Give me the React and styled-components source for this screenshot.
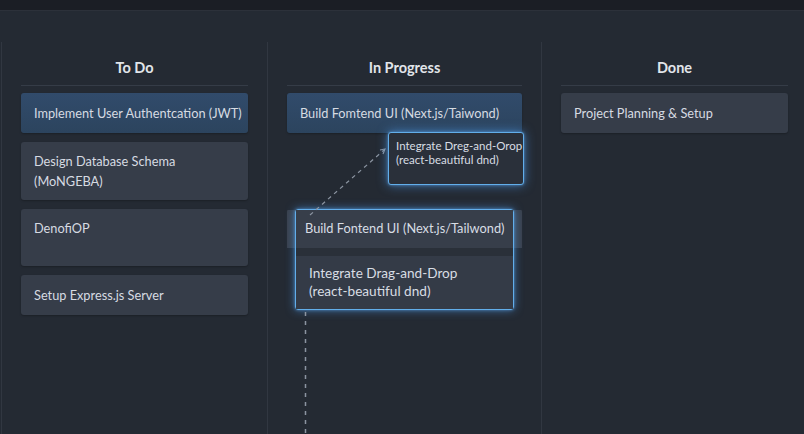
import styled, { createGlobalStyle, css } from 'styled-components';

const GlobalStyle = createGlobalStyle`
  html, body {
    margin: 0;
    padding: 0;
    background: #242a33;
    font-family: Lato, "Liberation Sans", sans-serif;
    color: #d9dee5;
  }
`;

const Page = styled.div`
  height: 434px;
  overflow: hidden;
  display: flex;
  flex-direction: column;
`;

const TopBar = styled.div`
  height: 10px;
  flex-shrink: 0;
  background: #1b1e25;
  border-bottom: 1px solid #2c313a;
`;

const Board = styled.div`
  flex: 1;
  display: grid;
  grid-template-columns: 266px 274px 1fr;
  padding-top: 31px;
  margin-left: 1px;
`;

const Column = styled.section`
  position: relative;
  border-left: 1px solid #313741;
  padding: 16px ${(p) => p.$right || 19}px 0 19px;
  display: flex;
  flex-direction: column;
`;

const ColumnTitle = styled.h2`
  margin: 0;
  font-size: 14.5px;
  font-weight: 700;
  line-height: 20px;
  text-align: center;
  color: #e1e5ea;
  padding-bottom: 7px;
  border-bottom: 1px solid #353c47;
  margin-bottom: 7px;
`;

const CardList = styled.div`
  display: flex;
  flex-direction: column;
  gap: 9px;
`;

const Card = styled.div`
  box-sizing: border-box;
  min-height: ${(p) => (p.$tall ? 57 : 39)}px;
  padding: ${(p) => (p.$tall ? '9px' : '10px')} 13px;
  border-radius: 3px;
  font-size: 12.75px;
  line-height: 20px;
  white-space: nowrap;
  color: #d6dbe2;
  background: #363d49;
  box-shadow: 0 1px 2px rgba(0, 0, 0, 0.25);
  ${(p) =>
    p.$active &&
    css`
      background: linear-gradient(180deg, #314b6b, #2c445e);
    `}
`;

const Slot = styled.div`
  height: 58px;
`;

/* placeholder row peeking out behind the highlighted drop target */
const DropArea = styled.div`
  position: relative;
  background: linear-gradient(#3a414d, #3a414d) no-repeat;
  background-size: 100% 38px;
  background-position: 0 1px;
  border-radius: 3px;
`;

const DropZone = styled.div`
  position: relative;
  margin: 0 8px;
  border: 1.5px solid #62aeea;
  border-radius: 3px;
  box-shadow: 0 0 10px rgba(74, 150, 230, 0.65), 0 0 3px rgba(110, 180, 245, 0.6),
    inset 0 0 6px rgba(74, 150, 230, 0.25);
`;

const ZoneCard = styled.div`
  box-sizing: border-box;
  height: ${(p) => p.$h}px;
  padding: ${(p) => p.$pad};
  font-size: ${(p) => p.$size}px;
  line-height: 18px;
  white-space: nowrap;
  color: #d8dde4;
  background: ${(p) => p.$bg};
`;

const ZoneGap = styled.div`
  height: 8px;
  background: #2a3039;
`;

const Ghost = styled.div`
  position: absolute;
  left: 120px;
  top: 90px;
  width: 136px;
  height: 53px;
  box-sizing: border-box;
  padding: 6px 0 0 7px;
  border: 1.5px solid #62aeea;
  border-radius: 3px;
  background: #2a303a;
  box-shadow: 0 0 11px rgba(74, 150, 230, 0.7), 0 0 3px rgba(110, 180, 245, 0.6);
  font-size: 11.5px;
  line-height: 14px;
  color: #d8dde4;
  white-space: nowrap;
`;

const Trail = styled.svg`
  position: absolute;
  left: 0;
  top: 0;
  pointer-events: none;
`;

const todo = [
  { lines: ['Implement User Authentcation (JWT)'], active: true },
  { lines: ['Design Database Schema', '(MoNGEBA)'], tall: true },
  { lines: ['DenofiOP'], tall: true },
  { lines: ['Setup Express.js Server'] },
];

export default function App() {
  return (
    <>
      <GlobalStyle />
      <Page>
        <TopBar />
        <Board>
          <Column>
            <ColumnTitle>To Do</ColumnTitle>
            <CardList>
              {todo.map((c) => (
                <Card key={c.lines[0]} $active={c.active} $tall={c.tall}>
                  {c.lines.map((l) => (
                    <div key={l}>{l}</div>
                  ))}
                </Card>
              ))}
            </CardList>
          </Column>

          <Column>
            <ColumnTitle>In Progress</ColumnTitle>
            <CardList>
              <Card $active>Build Fomtend UI (Next.js/Taiwond)</Card>
              <Slot />
              <DropArea>
                <DropZone>
                  <ZoneCard $h={38} $pad="9px 9px" $size={12.8} $bg="#373e4a">
                    Build Fontend UI (Next.js/Tailwond)
                  </ZoneCard>
                  <ZoneGap />
                  <ZoneCard $h={53} $pad="8px 13px" $size={13.6} $bg="#343b47">
                    Integrate Drag-and-Drop
                    <br />
                    (react-beautiful dnd)
                  </ZoneCard>
                </DropZone>
              </DropArea>
            </CardList>
            <Trail width="274" height="392" viewBox="0 0 274 392">
              <path
                d="M42 173 L116 108"
                stroke="#8b94a1"
                strokeWidth="1.2"
                strokeDasharray="4 4"
                fill="none"
              />
              <path d="M112 108 L117 107 L115 112" stroke="#8b94a1" strokeWidth="1.2" fill="none" />
              <path
                d="M37.5 270 L37.5 392"
                stroke="#8b94a1"
                strokeWidth="1.5"
                strokeDasharray="4 5"
                fill="none"
              />
            </Trail>
            <Ghost>
              Integrate Dreg-and-Orop
              <br />
              (react-beautiful dnd)
            </Ghost>
          </Column>

          <Column $right={16}>
            <ColumnTitle>Done</ColumnTitle>
            <CardList>
              <Card>Project Planning &amp; Setup</Card>
            </CardList>
          </Column>
        </Board>
      </Page>
    </>
  );
}
